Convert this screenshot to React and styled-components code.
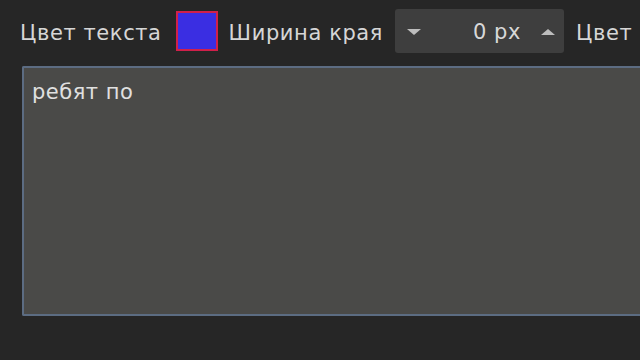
import React from 'react';
import styled, { createGlobalStyle } from 'styled-components';

const Global = createGlobalStyle`
  html, body {
    margin: 0;
    padding: 0;
    background: #262626;
    overflow: hidden;
  }
  body {
    font-family: "DejaVu Sans", "Open Sans", sans-serif;
  }
`;

const Styled = {
  Page: styled.div`
    width: 640px;
    height: 360px;
    background: #262626;
    display: flex;
    flex-direction: column;
    padding: 9px 0 0 20px;
    box-sizing: border-box;
    overflow: hidden;
  `,
  Toolbar: styled.div`
    display: flex;
    align-items: center;
    height: 44px;
    white-space: nowrap;
  `,
  Label: styled.span`
    color: #d6d6d6;
    font-size: 21px;
    letter-spacing: 0.6px;
    line-height: 1;
    padding-top: 4px;
    margin-right: ${({ gap }) => gap || 0}px;
  `,
  Swatch: styled.div`
    width: 42px;
    height: 40px;
    box-sizing: border-box;
    border: 2px solid #d0204a;
    background: #3a2ee2;
    margin-right: 11px;
  `,
  Spinner: styled.div`
    width: 169px;
    height: 44px;
    box-sizing: border-box;
    background: #3e3e3e;
    border-radius: 3px;
    display: flex;
    align-items: center;
    padding: 2px 9px 0 12px;
    margin-right: 12px;
    .value {
      flex: 1;
      text-align: right;
      color: #d8d8d8;
      font-size: 21px;
      letter-spacing: 0.6px;
      margin-right: 20px;
    }
  `,
  Arrow: styled.span`
    width: 0;
    height: 0;
    border-left: 7px solid transparent;
    border-right: 7px solid transparent;
    ${({ up }) =>
      up
        ? 'border-bottom: 6px solid #bdbdbd;'
        : 'border-top: 6px solid #bdbdbd;'}
  `,
  Editor: styled.div`
    margin-top: 13px;
    margin-left: 2px;
    height: 250px;
    width: 640px;
    box-sizing: border-box;
    background: #4a4a48;
    border: 2px solid #5c6c82;
    border-right: none;
    border-radius: 2px 0 0 2px;
    padding: 12px 8px;
    color: #e0e0e0;
    font-size: 21px;
    letter-spacing: 0.5px;
  `,
};

const App = () => {
  return (
    <>
      <Global />
      <Styled.Page>
        <Styled.Toolbar>
          <Styled.Label gap={14}>Цвет текста</Styled.Label>
          <Styled.Swatch />
          <Styled.Label gap={12}>Ширина края</Styled.Label>
          <Styled.Spinner>
            <Styled.Arrow />
            <span className="value">0 px</span>
            <Styled.Arrow up />
          </Styled.Spinner>
          <Styled.Label>Цвет</Styled.Label>
        </Styled.Toolbar>
        <Styled.Editor>ребят по</Styled.Editor>
      </Styled.Page>
    </>
  );
};

export default App;
